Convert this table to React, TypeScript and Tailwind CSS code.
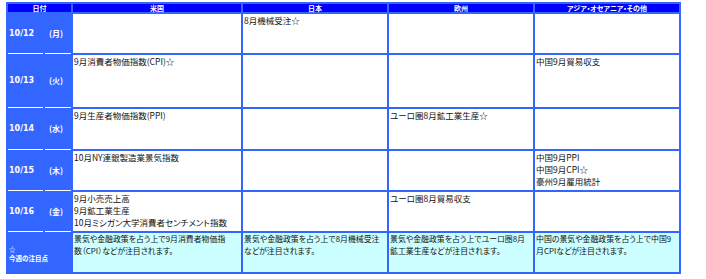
const jp = "font-['Noto_Sans_CJK_JP',sans-serif] [font-feature-settings:'palt']";

interface ScheduleRow {
  date: string;
  day: string;
  us: string[];
  jp: string[];
  eu: string[];
  asia: string[];
}

const rows: ScheduleRow[] = [
  { date: '10/12', day: '(月)', us: [], jp: ['8月機械受注☆'], eu: [], asia: [] },
  { date: '10/13', day: '(火)', us: ['9月消費者物価指数(CPI)☆'], jp: [], eu: [], asia: ['中国9月貿易収支'] },
  { date: '10/14', day: '(水)', us: ['9月生産者物価指数(PPI)'], jp: [], eu: ['ユーロ圏8月鉱工業生産☆'], asia: [] },
  {
    date: '10/15',
    day: '(木)',
    us: ['10月NY連銀製造業景気指数'],
    jp: [],
    eu: [],
    asia: ['中国9月PPI', '中国9月CPI☆', '豪州9月雇用統計'],
  },
  {
    date: '10/16',
    day: '(金)',
    us: ['9月小売売上高', '9月鉱工業生産', '10月ミシガン大学消費者センチメント指数'],
    jp: [],
    eu: ['ユーロ圏8月貿易収支'],
    asia: [],
  },
];

const notes: string[][] = [
  ['景気や金融政策を占う上で9月消費者物価指', '数（CPI）などが注目されます。'],
  ['景気や金融政策を占う上で8月機械受注', 'などが注目されます。'],
  ['景気や金融政策を占う上でユーロ圏8月', '鉱工業生産などが注目されます。'],
  ['中国の景気や金融政策を占う上で中国9', '月CPIなどが注目されます。'],
];

const Cell = ({ lines, note = false }: { lines: string[]; note?: boolean }) => (
  <div
    className={`${jp} overflow-hidden whitespace-nowrap pl-[1px] leading-[12px] text-[#111] ${
      note ? 'bg-[#ccffff] text-[7.9px]' : 'bg-white text-[8.5px]'
    }`}
  >
    {lines.map((line) => (
      <div key={line}>{line}</div>
    ))}
  </div>
);

const headers = ['米国', '日本', '欧州', 'アジア・オセアニア・その他'];

export default function App() {
  return (
    <div className="min-h-[279px] w-[706px] bg-white pl-[6px] pt-[2px]">
      <div className="grid w-fit grid-cols-[35px_26px_168px_144px_144px_144px] grid-rows-[8px_39px_52px_40px_39px_39px_39px] gap-[2px] bg-[#3366ff] p-[2px]">
        <div
          className={`${jp} col-span-2 flex items-center justify-center bg-[#0000ff] text-[7px] font-bold leading-[8px] text-white`}
        >
          日付
        </div>
        {headers.map((h) => (
          <div
            key={h}
            className={`${jp} flex items-center justify-center bg-[#0000ff] text-[7px] font-bold leading-[8px] text-white`}
          >
            {h}
          </div>
        ))}

        {rows.map((row) => (
          <div key={row.date} className="contents">
            <div className="flex items-center pl-[1px] font-['DejaVu_Sans',sans-serif] text-[8px] font-bold text-white shadow-[0_1px_0_#ffffff]">
              {row.date}
            </div>
            <div
              className={`${jp} flex items-center pl-[4px] text-[8px] font-bold text-white shadow-[0_1px_0_#ffffff]`}
            >
              {row.day}
            </div>
            <Cell lines={row.us} />
            <Cell lines={row.jp} />
            <Cell lines={row.eu} />
            <Cell lines={row.asia} />
          </div>
        ))}

        <div
          className={`${jp} col-span-2 flex flex-col justify-center pl-[1px] pt-[2px] text-[6.5px] font-bold leading-[9px] text-white`}
        >
          <span>☆</span>
          <span>今週の注目点</span>
        </div>
        {notes.map((n, i) => (
          <Cell key={i} lines={n} note />
        ))}
      </div>
    </div>
  );
}
